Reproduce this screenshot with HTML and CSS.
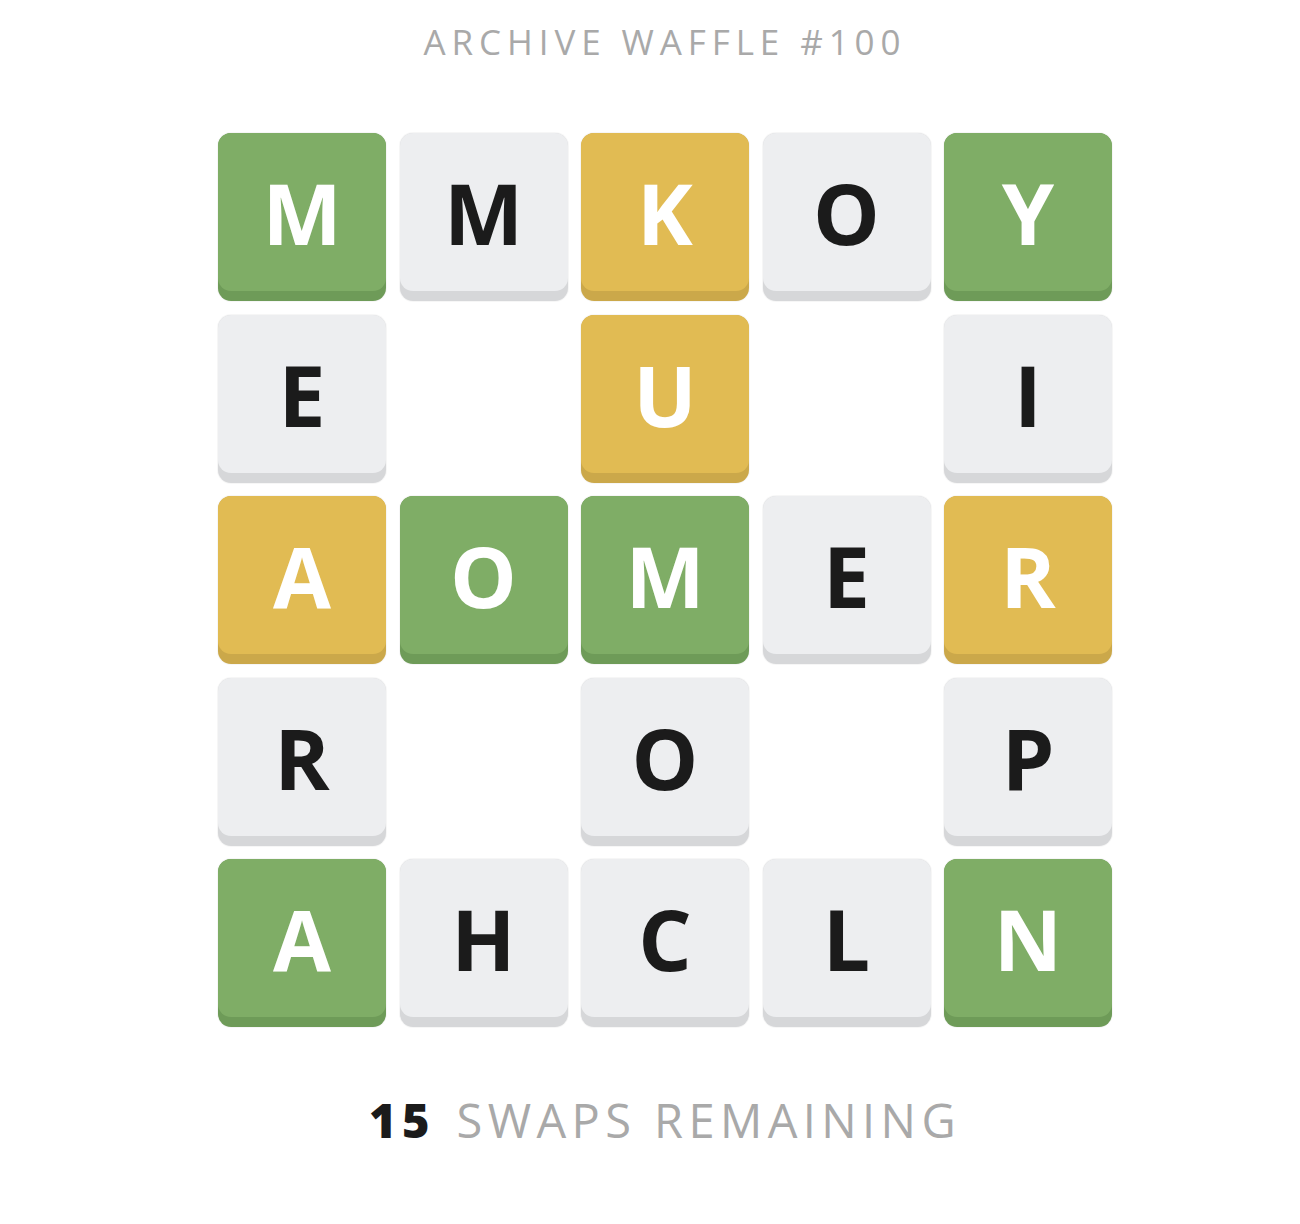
FILE: index.html
```html
<!DOCTYPE html>
<html>
<head>
<meta charset="utf-8">
<link rel="stylesheet" href="styles.css">
</head>
<body>
<main class="page">
  <h1 class="title">ARCHIVE WAFFLE #100</h1>
  <div class="board">
    <div class="tile green"><span>M</span></div>
    <div class="tile gray"><span>M</span></div>
    <div class="tile yellow"><span>K</span></div>
    <div class="tile gray"><span>O</span></div>
    <div class="tile green"><span>Y</span></div>

    <div class="tile gray"><span>E</span></div>
    <div class="blank"></div>
    <div class="tile yellow"><span>U</span></div>
    <div class="blank"></div>
    <div class="tile gray"><span>I</span></div>

    <div class="tile yellow"><span>A</span></div>
    <div class="tile green"><span>O</span></div>
    <div class="tile green"><span>M</span></div>
    <div class="tile gray"><span>E</span></div>
    <div class="tile yellow"><span>R</span></div>

    <div class="tile gray"><span>R</span></div>
    <div class="blank"></div>
    <div class="tile gray"><span>O</span></div>
    <div class="blank"></div>
    <div class="tile gray"><span>P</span></div>

    <div class="tile green"><span>A</span></div>
    <div class="tile gray"><span>H</span></div>
    <div class="tile gray"><span>C</span></div>
    <div class="tile gray"><span>L</span></div>
    <div class="tile green"><span>N</span></div>
  </div>
  <p class="swaps"><b class="count">15</b> SWAPS REMAINING</p>
</main>
</body>
</html>
```
FILE: styles.css
```css
html, body {
  margin: 0;
  padding: 0;
  background: #ffffff;
}
body {
  font-family: "Open Sans", "Noto Sans", sans-serif;
}
.page {
  display: flex;
  flex-direction: column;
  align-items: center;
  padding-left: 30px;
}
.title {
  margin: 18px 0 0;
  font-size: 35px;
  font-weight: 400;
  letter-spacing: 5.9px;
  color: #a9a9a9;
  line-height: 48px;
}
.board {
  margin-top: 67px;
  display: grid;
  grid-template-columns: repeat(5, 168px);
  grid-auto-rows: 168px;
  gap: 13.5px;
}
.tile {
  border-radius: 13px;
  position: relative;
  box-shadow: 0 0 0 1px rgba(0,0,0,0.035);
}
.tile span {
  display: flex;
  align-items: center;
  justify-content: center;
  height: 158px;
  border-radius: 13px;
  font-size: 84px;
  font-weight: 700;
  line-height: 1;
  padding-top: 2px;
  box-sizing: border-box;
}
.green { background: #6e9b58; }
.green span { background: #7fad66; color: #ffffff; }
.yellow { background: #cba84a; }
.yellow span { background: #e1bb53; color: #ffffff; }
.gray { background: #d6d7d9; }
.gray span { background: #edeef0; color: #1b1b1b; }
.swaps {
  margin: 63px 0 0;
  font-size: 47px;
  letter-spacing: 5.4px;
  color: #a9a9a9;
  line-height: 60px;
}
.count {
  color: #1b1b1b;
  font-weight: 800;
  margin-right: 4px;
}
```
